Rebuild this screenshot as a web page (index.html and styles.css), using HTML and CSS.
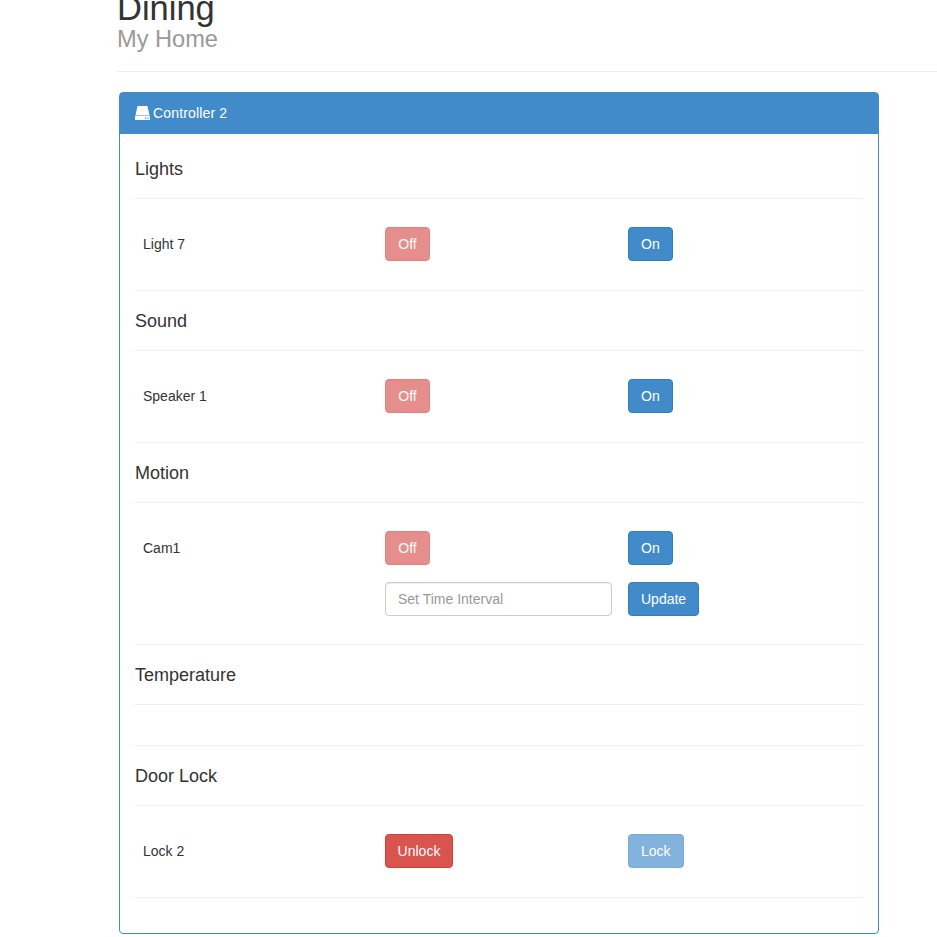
FILE: index.html
```html
<!DOCTYPE html>
<html lang="en">
<head>
  <meta charset="UTF-8">
  <meta name="viewport" content="width=device-width, initial-scale=1.0">
  <title>Dining - My Home</title>
  <link rel="stylesheet" href="styles.css">
</head>
<body>
  <!-- Header -->
  <div class="page-header">
    <h1>Dining</h1>
    <small>My Home</small>
  </div>

  <!-- Controller panel -->
  <div class="panel">
    <div class="panel-heading">
      <svg class="icon-hdd" viewBox="0 0 15 14" aria-hidden="true">
        <path fill="#fff" d="M2.6 0H12.4L14.6 9.4H0.4Z"/>
        <path fill="#fff" fill-rule="evenodd" d="M0.6 10H14.4Q15 10 15 10.6V13.4Q15 14 14.4 14H0.6Q0 14 0 13.4V10.6Q0 10 0.6 10ZM10 11.6V12.6H11.4V11.6ZM12.4 11.6V12.6H13.8V11.6Z"/>
      </svg>
      Controller 2
    </div>
    <div class="panel-body">
      <h4>Lights</h4>
      <div class="device-list">
        <div class="device">
          <div class="device-name">Light 7</div>
          <div><button class="btn btn-danger btn-off faded">Off</button></div>
          <div><button class="btn btn-primary">On</button></div>
        </div>
      </div>

      <h4>Sound</h4>
      <div class="device-list">
        <div class="device">
          <div class="device-name">Speaker 1</div>
          <div><button class="btn btn-danger btn-off faded">Off</button></div>
          <div><button class="btn btn-primary">On</button></div>
        </div>
      </div>

      <h4>Motion</h4>
      <div class="device-list">
        <div class="device two-rows">
          <div class="device-name">Cam1</div>
          <div><button class="btn btn-danger btn-off faded">Off</button></div>
          <div><button class="btn btn-primary">On</button></div>
          <div></div>
          <div><input type="text" class="form-control" placeholder="Set Time Interval"></div>
          <div><button class="btn btn-primary">Update</button></div>
        </div>
      </div>

      <h4>Temperature</h4>
      <div class="device-list empty"></div>

      <h4>Door Lock</h4>
      <div class="device-list">
        <div class="device">
          <div class="device-name">Lock 2</div>
          <div><button class="btn btn-danger btn-unlock">Unlock</button></div>
          <div><button class="btn btn-primary faded">Lock</button></div>
        </div>
      </div>
    </div>
  </div>
</body>
</html>
```

FILE: styles.css
```css
/* Basic styling for the page */
body {
  font-family: "Liberation Sans", Arial, sans-serif;
  font-size: 14px;
  line-height: 20px;
  color: #333;
  background-color: #fff;
  margin: 0;
  padding: 0 0 0 117px;
  overflow: hidden;
}
.page-header {
  height: 82px;
  margin-top: -11px;
  border-bottom: 1px solid #eee;
}
.page-header h1 {
  margin: 0;
  font-size: 34.5px;
  font-weight: 500;
  line-height: 38px;
}
.page-header small {
  display: block;
  font-size: 23.6px;
  line-height: 24px;
  color: #999;
}
.panel {
  width: 758px;
  margin: 20px 0 0 2px;
  border: 1px solid #428bca;
  border-radius: 4px;
}
.panel-heading {
  display: flex;
  align-items: center;
  gap: 3px;
  height: 39px;
  padding: 0 0 2px 15px;
  background-color: #428bca;
  color: #fff;
  letter-spacing: .15px;
}
.icon-hdd {
  width: 15px;
  height: 14px;
}
.panel-body {
  padding: 5px 15px 35px;
}
h4 {
  margin: 0;
  padding: 20px 0 19px;
  font-size: 18px;
  font-weight: 500;
  line-height: 20px;
  border-bottom: 1px solid #eee;
}
.device-list {
  border-bottom: 1px solid #eee;
}
.device-list.empty {
  height: 40px;
}
.device {
  display: grid;
  grid-template-columns: 242px 243px 1fr;
  row-gap: 17px;
  padding: 28px 0 29px;
}
.device.two-rows {
  padding-bottom: 28px;
}
.device > div {
  padding: 0 8px;
}
.device-name {
  line-height: 34px;
}
.btn {
  display: inline-block;
  height: 34px;
  padding: 0 12px;
  font-family: inherit;
  font-size: 14px;
  color: #fff;
  border: 1px solid transparent;
  border-radius: 4px;
  vertical-align: top;
}
.btn-primary {
  background-color: #428bca;
  border-color: #357ebd;
}
.btn-danger {
  background-color: #d9534f;
  border-color: #d43f3a;
}
.btn-off {
  width: 45px;
}
.btn-unlock {
  width: 68px;
  padding: 0;
}
.faded {
  opacity: .65;
}
.form-control {
  display: block;
  width: 100%;
  height: 34px;
  padding: 6px 12px;
  box-sizing: border-box;
  font-family: inherit;
  font-size: 14px;
  color: #555;
  border: 1px solid #ccc;
  border-radius: 4px;
  box-shadow: inset 0 1px 1px rgba(0, 0, 0, .075);
}
.form-control::placeholder {
  color: #999;
}
```
